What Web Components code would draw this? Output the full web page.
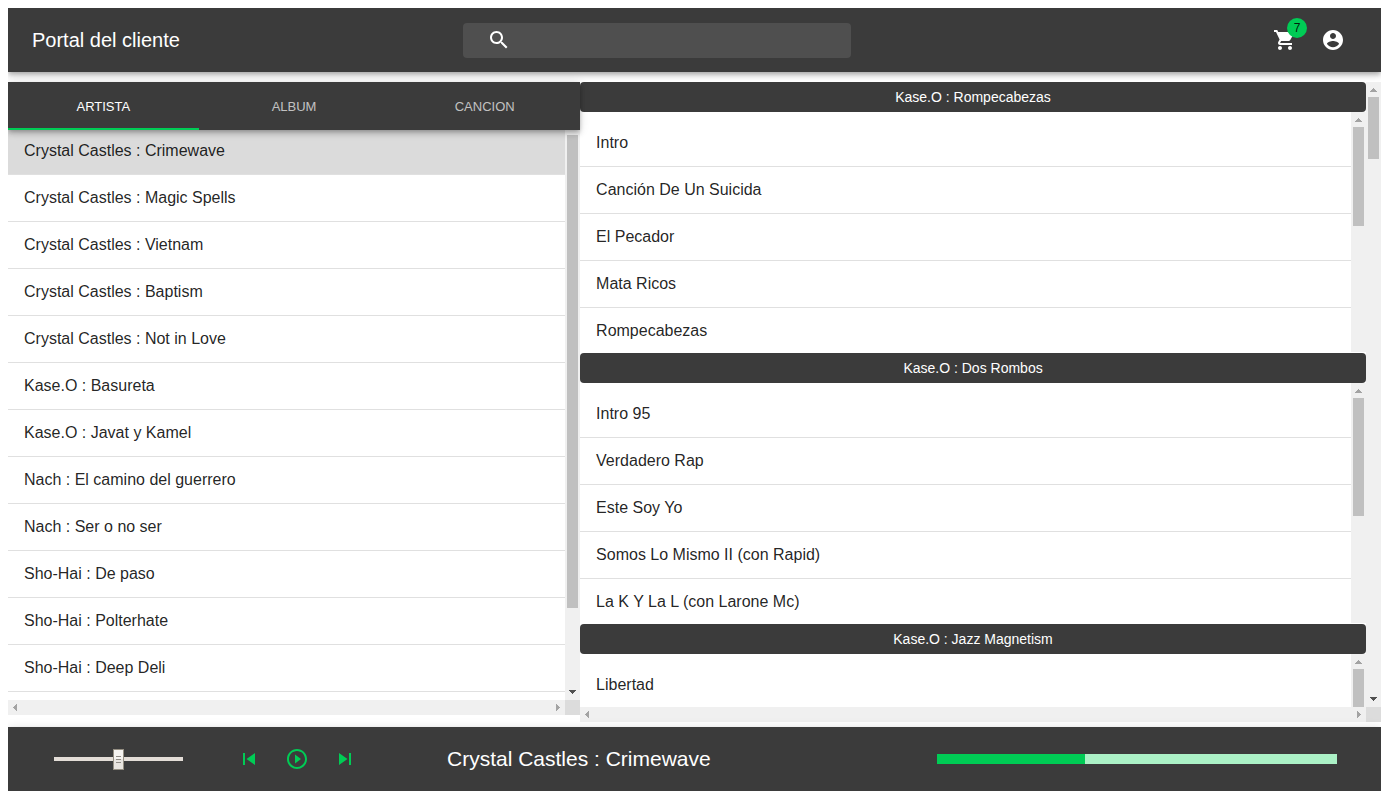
<!DOCTYPE html>
<html lang="es">
<head>
<meta charset="utf-8">
<meta name="viewport" content="width=device-width, initial-scale=1">
<title>Portal del cliente</title>
<style>
  :root {
    --bar: #3b3b3b;
    --accent: #00cc55;
    --accent-light: #abf1c6;
    --shadow: 0 2px 4px -1px rgba(0,0,0,.2), 0 4px 5px 0 rgba(0,0,0,.14), 0 1px 10px 0 rgba(0,0,0,.12);
  }
  body { margin: 8px 8px 10px; font-family: "Liberation Sans", Arial, sans-serif; font-size: 16px; color: rgba(0,0,0,.87); background: #fff; }
</style>
</head>
<body>
<client-portal></client-portal>
<script>
const define = (name, html, setup) => {
  const template = document.createElement('template');
  template.innerHTML = html;
  customElements.define(name, class extends HTMLElement {
    connectedCallback() {
      if (this.shadowRoot) return;
      this.attachShadow({ mode: 'open' }).append(template.content.cloneNode(true));
      if (setup) setup(this, this.shadowRoot);
    }
  });
};

const icons = {
  search: 'M15.5 14h-.79l-.28-.27C15.41 12.59 16 11.11 16 9.5 16 5.91 13.09 3 9.5 3S3 5.91 3 9.5 5.91 16 9.5 16c1.61 0 3.09-.59 4.23-1.57l.27.28v.79l5 4.99L20.49 19l-4.99-5zm-6 0C7.01 14 5 11.99 5 9.5S7.01 5 9.5 5 14 7.01 14 9.5 11.99 14 9.5 14z',
  cart: 'M7 18c-1.1 0-1.99.9-1.99 2S5.9 22 7 22s2-.9 2-2-.9-2-2-2zM1 2v2h2l3.6 7.59-1.35 2.45c-.16.28-.25.61-.25.96 0 1.1.9 2 2 2h12v-2H7.42c-.14 0-.25-.11-.25-.25l.03-.12.9-1.63h7.45c.75 0 1.41-.41 1.75-1.03l3.58-6.49c.08-.14.12-.31.12-.48 0-.55-.45-1-1-1H5.21l-.94-2H1zm16 16c-1.1 0-1.99.9-1.99 2s.89 2 1.99 2 2-.9 2-2-.9-2-2-2z',
  account: 'M12 2C6.48 2 2 6.48 2 12s4.48 10 10 10 10-4.48 10-10S17.52 2 12 2zm0 3c1.66 0 3 1.34 3 3s-1.34 3-3 3-3-1.34-3-3 1.34-3 3-3zm0 14.2c-2.5 0-4.71-1.28-6-3.22.03-1.99 4-3.08 6-3.08 1.99 0 5.97 1.09 6 3.08-1.29 1.94-3.5 3.22-6 3.22z',
  previous: 'M6 6h2v12H6zm3.5 6l8.5 6V6z',
  play: 'M10 16.5l6-4.5-6-4.5v9zM12 2C6.48 2 2 6.48 2 12s4.48 10 10 10 10-4.48 10-10S17.52 2 12 2zm0 18c-4.41 0-8-3.59-8-8s3.59-8 8-8 8 3.59 8 8-3.59 8-8 8z',
  next: 'M6 18l8.5-6L6 6v12zM16 6v12h2V6h-2z'
};

define('ui-icon', `
  <style>:host { display: block; width: 24px; height: 24px } svg { display: block; fill: currentColor }</style>
  <svg width="24" height="24" viewBox="0 0 24 24" aria-hidden="true"><path/></svg>`,
  (host, root) => root.querySelector('path').setAttribute('d', icons[host.getAttribute('name')]));

define('icon-button', `
  <style>
    :host { display: block }
    button { display: block; width: 48px; height: 48px; padding: 12px; border: 0; border-radius: 50%; background: none; color: inherit; cursor: pointer }
  </style>
  <button><slot></slot></button>`,
  (host, root) => root.querySelector('button').setAttribute('aria-label', host.getAttribute('label')));

/* Classic scroll bar: an arrow at each end and a thumb sized in percent of the track. */
define('scroll-bar', `
  <style>
    :host { display: flex; flex-direction: column; width: 15px; min-height: 0; background: #f0f0f0 }
    svg { flex: none; display: block; fill: #a3a3a3 }
    .track { flex: 1; min-height: 0; padding: 0 2px }
    .thumb { width: 11px; background: #c0c0c0 }
    :host([horizontal]) { flex-direction: row; width: auto; height: 15px }
    :host([horizontal]) .thumb { display: none }
    :host(:not([horizontal])) .end { fill: #505050 }
    :host([open-ended]) .end { visibility: hidden }
  </style>
  <svg width="15" height="15" viewBox="0 0 15 15" shape-rendering="crispEdges" aria-hidden="true"><path d="M4 10h7v-1h-1v-1h-1v-1h-1v-1h-1v1h-1v1h-1v1h-1z"/></svg>
  <div class="track"><div class="thumb"></div></div>
  <svg class="end" width="15" height="15" viewBox="0 0 15 15" shape-rendering="crispEdges" aria-hidden="true"><path d="M4 5h7v1h-1v1h-1v1h-1v1h-1v-1h-1v-1h-1v-1h-1z"/></svg>`,
  (host, root) => {
    if (!host.hasAttribute('horizontal')) return;
    const [start, end] = root.querySelectorAll('path');
    start.setAttribute('d', 'M9 4v7h-1v-1h-1v-1h-1v-1h-1v-1h1v-1h1v-1h1v-1z');
    end.setAttribute('d', 'M6 4v7h1v-1h1v-1h1v-1h1v-1h-1v-1h-1v-1h-1v-1z');
  });

define('scroll-area', `
  <style>
    :host { display: grid; grid-template: minmax(0, 1fr) auto / minmax(0, 1fr) 15px; min-height: 0 }
    .view { overflow: auto; scrollbar-width: none }
    .corner { background: #dcdcdc }
    :host(:not([both])) .bottom { display: none }
  </style>
  <div class="view"><slot></slot></div>
  <scroll-bar class="side"></scroll-bar>
  <scroll-bar class="bottom" horizontal></scroll-bar>
  <div class="corner bottom"></div>`,
  (host, root) => {
    const side = root.querySelector('.side');
    side.toggleAttribute('open-ended', !host.hasAttribute('both'));
    side.shadowRoot.querySelector('.thumb').style.height = host.getAttribute('thumb') + '%';
  });

define('song-list', `
  <style>:host { display: block; padding: 8px 0 }</style>
  <slot></slot>`, host => host.setAttribute('role', 'list'));

define('song-row', `
  <style>
    :host { display: block; border-bottom: 1px solid #e0e0e0 }
    button { display: block; width: 100%; padding: 11px 16px; border: 0; background: none; font: inherit; line-height: 24px; color: inherit; text-align: left; white-space: nowrap; cursor: pointer }
    :host([selected]) button { background: #dbdbdb }
  </style>
  <button><slot></slot></button>`, host => host.setAttribute('role', 'listitem'));

define('tab-bar', `
  <style>
    :host { display: flex; height: 48px; background: var(--bar); box-shadow: var(--shadow); color: #fff }
  </style>
  <slot></slot>`, host => host.setAttribute('role', 'tablist'));

define('tab-item', `
  <style>
    :host { display: flex; flex: 1 }
    button { flex: 1; padding: 2px 12px 0; border: 0; border-bottom: 2px solid transparent; background: none; font: inherit; font-size: 13px; color: rgba(255,255,255,.7); text-transform: uppercase; cursor: pointer }
    :host([active]) button { color: #fff; border-color: var(--accent) }
  </style>
  <button role="tab"><slot></slot></button>`,
  (host, root) => root.querySelector('button').setAttribute('aria-selected', host.hasAttribute('active')));

define('album-section', `
  <style>
    :host { display: block; margin-bottom: 1px }
    button { display: block; width: 100%; height: 30px; padding: 0 8px; border: 0; border-radius: 4px; background: var(--bar); font: inherit; font-size: 14px; color: #fff; cursor: pointer }
    scroll-area { height: 240px }
  </style>
  <button></button>
  <scroll-area><song-list><slot></slot></song-list></scroll-area>`,
  (host, root) => {
    root.querySelector('button').textContent = host.getAttribute('heading');
    root.querySelector('scroll-area').shadowRoot.querySelector('.side').shadowRoot
      .querySelector('.thumb').style.height = host.getAttribute('thumb') + '%';
  });

define('portal-header', `
  <style>
    :host { display: grid; grid-template-columns: 431fr 388fr 506fr; align-items: center; height: 64px; box-sizing: border-box; padding: 0 24px; background: var(--bar); color: #fff; box-shadow: var(--shadow) }
    h1 { margin: 0; font-size: 20px; font-weight: 400; line-height: 32px }
    label { display: flex; align-items: center; gap: 12px; height: 35px; box-sizing: border-box; padding: 0 24px; border-radius: 4px; background: #4f4f4f }
    ui-icon { flex: none }
    input { flex: 1; min-width: 0; padding: 0; border: 0; outline: 0; background: none; font: inherit; color: inherit }
    nav { display: flex; justify-content: flex-end }
    .cart { position: relative }
    .badge { position: absolute; top: 2px; right: 2px; width: 20px; height: 20px; border-radius: 50%; background: var(--accent); color: rgba(0,0,0,.87); font-size: 12px; line-height: 20px; text-align: center; pointer-events: none }
  </style>
  <h1>Portal del cliente</h1>
  <label><ui-icon name="search"></ui-icon><input type="text" aria-label="Buscar"></label>
  <nav>
    <div class="cart"><icon-button label="Carrito"><ui-icon name="cart"></ui-icon></icon-button><span class="badge">7</span></div>
    <icon-button label="Cuenta"><ui-icon name="account"></ui-icon></icon-button>
  </nav>`);

define('music-player', `
  <style>
    :host { display: flex; align-items: center; height: 64px; box-sizing: border-box; padding: 0 44px 0 46px; background: var(--bar); color: #fff; box-shadow: var(--shadow) }
    .volume { -webkit-appearance: none; appearance: none; flex: none; width: 129px; height: 21px; margin: 0; background: linear-gradient(#e3ddd7, #e3ddd7) center / 100% 4px no-repeat }
    .volume::-webkit-slider-thumb {
      -webkit-appearance: none; box-sizing: border-box; width: 11px; height: 21px; border: 1px solid #958f83;
      background:
        linear-gradient(#8f8b85, #8f8b85) 2px 6px / 5px 1px no-repeat,
        linear-gradient(#8f8b85, #8f8b85) 2px 9px / 5px 1px no-repeat,
        linear-gradient(#8f8b85, #8f8b85) 2px 12px / 5px 1px no-repeat,
        linear-gradient(#f5f3f0 50%, #e8e4df 50%);
    }
    .controls { display: flex; flex: none; margin: 0 78px 0 42px; color: var(--accent) }
    h2 { flex: 1; min-width: 0; margin: 0; font-size: 21px; font-weight: 400; line-height: 32px; white-space: nowrap }
    progress { -webkit-appearance: none; appearance: none; flex: none; display: block; width: 400px; height: 10px; border: 0; background: var(--accent-light) }
    progress::-webkit-progress-bar { background: var(--accent-light) }
    progress::-webkit-progress-value { background: var(--accent) }
  </style>
  <input class="volume" type="range" min="0" max="100" value="50" aria-label="Volumen">
  <div class="controls">
    <icon-button label="Anterior"><ui-icon name="previous"></ui-icon></icon-button>
    <icon-button label="Reproducir"><ui-icon name="play"></ui-icon></icon-button>
    <icon-button label="Siguiente"><ui-icon name="next"></ui-icon></icon-button>
  </div>
  <h2>Crystal Castles : Crimewave</h2>
  <progress max="100" value="37" aria-label="Progreso"></progress>`);

define('client-portal', `
  <style>
    :host { display: flex; flex-direction: column; height: calc(100vh - 18px); min-height: 400px }
    portal-header, music-player { flex: none }
    main { flex: 1; min-height: 0; display: grid; grid-template: minmax(0, 1fr) / 5fr 7fr; margin-top: 10px }
    .library { display: flex; flex-direction: column; min-width: 0; min-height: 0; padding-bottom: 12px }
    tab-bar { flex: none; position: relative; z-index: 1; margin-bottom: -10px }
    .library scroll-area { flex: 1 }
    .albums { min-width: 0; margin-bottom: 5px }
  </style>
  <portal-header></portal-header>
  <main>
    <section class="library">
      <tab-bar><tab-item active>Artista</tab-item><tab-item>Album</tab-item><tab-item>Cancion</tab-item></tab-bar>
      <scroll-area both thumb="86">
        <song-list>
          <song-row selected>Crystal Castles : Crimewave</song-row>
          <song-row>Crystal Castles : Magic Spells</song-row>
          <song-row>Crystal Castles : Vietnam</song-row>
          <song-row>Crystal Castles : Baptism</song-row>
          <song-row>Crystal Castles : Not in Love</song-row>
          <song-row>Kase.O : Basureta</song-row>
          <song-row>Kase.O : Javat y Kamel</song-row>
          <song-row>Nach : El camino del guerrero</song-row>
          <song-row>Nach : Ser o no ser</song-row>
          <song-row>Sho-Hai : De paso</song-row>
          <song-row>Sho-Hai : Polterhate</song-row>
          <song-row>Sho-Hai : Deep Deli</song-row>
        </song-list>
      </scroll-area>
    </section>
    <scroll-area class="albums" both thumb="10.4">
      <album-section heading="Kase.O : Rompecabezas" thumb="47">
        <song-row>Intro</song-row>
        <song-row>Canción De Un Suicida</song-row>
        <song-row>El Pecador</song-row>
        <song-row>Mata Ricos</song-row>
        <song-row>Rompecabezas</song-row>
      </album-section>
      <album-section heading="Kase.O : Dos Rombos" thumb="56">
        <song-row>Intro 95</song-row>
        <song-row>Verdadero Rap</song-row>
        <song-row>Este Soy Yo</song-row>
        <song-row>Somos Lo Mismo II (con Rapid)</song-row>
        <song-row>La K Y La L (con Larone Mc)</song-row>
      </album-section>
      <album-section heading="Kase.O : Jazz Magnetism" thumb="50">
        <song-row>Libertad</song-row>
      </album-section>
    </scroll-area>
  </main>
  <music-player></music-player>`);
</script>
</body>
</html>
